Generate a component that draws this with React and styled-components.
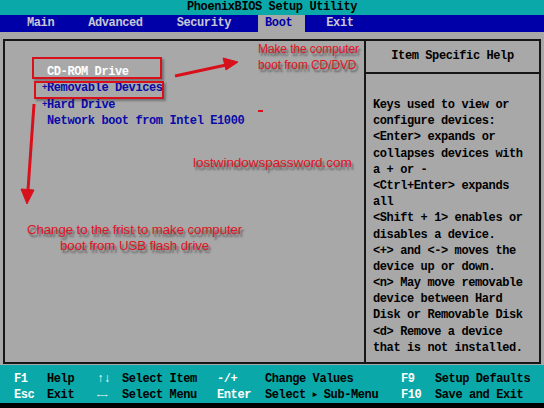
import styled, { createGlobalStyle } from "styled-components";

const GlobalStyle = createGlobalStyle`
  html, body {
    margin: 0;
    padding: 0;
    background: #000;
  }
`;

const Screen = styled.div`
  position: relative;
  width: 544px;
  height: 408px;
  display: flex;
  flex-direction: column;
  background: #000;
  overflow: hidden;
  font-family: "Liberation Mono", "DejaVu Sans Mono", monospace;
  font-weight: bold;
  font-size: 12px;
  letter-spacing: -0.4px;
`;

const TitleBar = styled.div`
  height: 15px;
  line-height: 15px;
  background: #0aa8a8;
  color: #000;
  text-align: center;
`;

const MenuBar = styled.div`
  height: 17px;
  display: flex;
  gap: 14px;
  padding-left: 20px;
  background: #0000a8;
`;

const Tab = styled.div`
  padding: 0 13px 0 7px;
  line-height: 17px;
  color: ${(p) => (p.$active ? "#0000a8" : "#c8c8d6")};
  background: ${(p) => (p.$active ? "#a8a8a8" : "transparent")};
`;

const Body = styled.div`
  height: 333px;
  box-sizing: border-box;
  padding: 7px 3px 1px 3px;
  background: #a8a8a8;
`;

const Frame = styled.div`
  height: 100%;
  box-sizing: border-box;
  border: 2px solid #161616;
  display: grid;
  grid-template-columns: 359px 1fr;
`;

const ListPane = styled.div`
  padding: 23px 0 0 37px;
`;

const Row = styled.div`
  display: flex;
  height: 16.3px;
  line-height: 16.3px;
  white-space: pre;
  color: ${(p) => (p.$selected ? "#ffffff" : "#0a0aa8")};
`;

const Marker = styled.span`
  width: 5px;
  font-size: 9px;
  letter-spacing: 0;
`;

const HelpPane = styled.div`
  border-left: 2px solid #161616;
  display: flex;
  flex-direction: column;
`;

const HelpHeader = styled.div`
  height: 31px;
  line-height: 31px;
  border-bottom: 2px solid #161616;
  text-align: center;
  color: #000;
`;

const HelpText = styled.div`
  padding: 23px 7px 0 7px;
  color: #000;
`;

const HelpLine = styled.div`
  height: 16.2px;
  line-height: 16.2px;
  white-space: pre;
`;

const KeyBar = styled.div`
  height: 38px;
  box-sizing: border-box;
  padding: 6px 0 0 14px;
  background: #0aa8a8;
  display: grid;
  grid-template-columns: 33px 50px 25px 95px 48px 136px 34px 1fr;
  grid-auto-rows: 16px;
  line-height: 16px;
  white-space: pre;
`;

const Key = styled.span`
  color: #ffffff;
  font-size: ${(p) => (p.$small ? "9px" : "12px")};
`;

const Desc = styled.span`
  color: #000;
`;

const Tri = styled.span`
  font-size: 8px;
  vertical-align: 1px;
`;

const BottomStrip = styled.div`
  height: 5px;
  background: #000;
`;

const Note = styled.div`
  position: absolute;
  left: ${(p) => p.$x}px;
  top: ${(p) => p.$y}px;
  font-family: "Liberation Sans", Arial, sans-serif;
  font-weight: normal;
  font-size: ${(p) => p.$size || 12}px;
  line-height: 16px;
  letter-spacing: -0.1px;
  color: #e01424;
  text-align: ${(p) => p.$align || "left"};
  white-space: pre;
  text-shadow: 2px 3px 2px rgba(0, 0, 0, 0.45);
`;

const Callout = styled.div`
  position: absolute;
  left: ${(p) => p.$x}px;
  top: ${(p) => p.$y}px;
  width: ${(p) => p.$w}px;
  height: ${(p) => p.$h}px;
  box-sizing: border-box;
  border: 2px solid #d8101c;
  box-shadow: 2px 2px 2px rgba(0, 0, 0, 0.3);
`;

const Overlay = styled.svg`
  position: absolute;
  left: 0;
  top: 0;
  pointer-events: none;
`;

const tabs = ["Main", "Advanced", "Security", "Boot", "Exit"];

const devices = [
  { mark: "", name: "CD-ROM Drive", selected: true },
  { mark: "+", name: "Removable Devices" },
  { mark: "+", name: "Hard Drive" },
  { mark: "", name: "Network boot from Intel E1000" },
];

const help = [
  "Keys used to view or",
  "configure devices:",
  "<Enter> expands or",
  "collapses devices with",
  "a + or -",
  "<Ctrl+Enter> expands",
  "all",
  "<Shift + 1> enables or",
  "disables a device.",
  "<+> and <-> moves the",
  "device up or down.",
  "<n> May move removable",
  "device between Hard",
  "Disk or Removable Disk",
  "<d> Remove a device",
  "that is not installed.",
];

export default function App() {
  return (
    <>
      <GlobalStyle />
      <Screen>
        <TitleBar>PhoenixBIOS Setup Utility</TitleBar>
        <MenuBar>
          {tabs.map((t) => (
            <Tab key={t} $active={t === "Boot"}>
              {t}
            </Tab>
          ))}
        </MenuBar>
        <Body>
          <Frame>
            <ListPane>
              {devices.map((d) => (
                <Row key={d.name} $selected={d.selected}>
                  <Marker>{d.mark}</Marker>
                  {d.name}
                </Row>
              ))}
            </ListPane>
            <HelpPane>
              <HelpHeader>Item Specific Help</HelpHeader>
              <HelpText>
                {help.map((l, i) => (
                  <HelpLine key={i}>{l}</HelpLine>
                ))}
              </HelpText>
            </HelpPane>
          </Frame>
        </Body>
        <KeyBar>
          <Key>F1</Key>
          <Desc>Help</Desc>
          <Key>↑↓</Key>
          <Desc>Select Item</Desc>
          <Key>-/+</Key>
          <Desc>Change Values</Desc>
          <Key>F9</Key>
          <Desc>Setup Defaults</Desc>
          <Key>Esc</Key>
          <Desc>Exit</Desc>
          <Key $small>←→</Key>
          <Desc>Select Menu</Desc>
          <Key>Enter</Key>
          <Desc>
            Select <Tri>►</Tri> Sub-Menu
          </Desc>
          <Key>F10</Key>
          <Desc>Save and Exit</Desc>
        </KeyBar>
        <BottomStrip />

        <Callout $x={32} $y={57} $w={130} $h={22} />
        <Callout $x={34} $y={81} $w={130} $h={18} />

        <Overlay width="544" height="408" viewBox="0 0 544 408">
          <g fill="#d8101c" stroke="#d8101c">
            <line x1="175" y1="76" x2="226" y2="65" strokeWidth="3" />
            <polygon points="238,62 223,58 226,70" strokeWidth="1" />
            <line x1="34" y1="104" x2="28" y2="190" strokeWidth="3" />
            <polygon points="27,204 21,189 34,190" strokeWidth="1" />
            <line x1="258" y1="111" x2="263" y2="111" strokeWidth="2" />
          </g>
        </Overlay>

        <Note $x={258} $y={41} $size={12}>
          {"Make the computer\nboot from CD/DVD"}
        </Note>
        <Note $x={193} $y={155} $size={13.6}>
          lostwindowspassword.com
        </Note>
        <Note $x={27} $y={222} $size={13.3} $align="center">
          {"Change to the frist to make computer\nboot from USB flash drive"}
        </Note>
      </Screen>
    </>
  );
}
